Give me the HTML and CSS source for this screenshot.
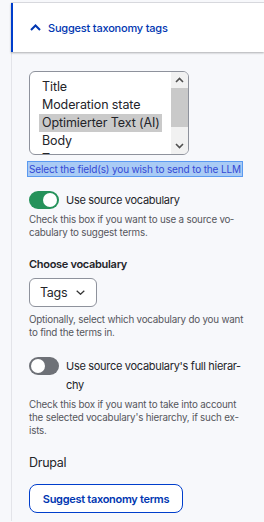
FILE: index.html
```html
<!DOCTYPE html>
<html lang="en">
<head>
<meta charset="utf-8">
<link rel="stylesheet" href="styles.css">
</head>
<body>
<div class="panel">
  <div class="summary">
    <svg class="chev" width="11" height="7" viewBox="0 0 11 7"><path d="M1 6 L5.5 1.5 L10 6" fill="none" stroke="#0036b1" stroke-width="2"/></svg>
    <span class="summary-text">Suggest taxonomy tags</span>
  </div>
  <div class="content">
    <div class="listbox">
      <div class="options">
        <div class="opt">Title</div>
        <div class="opt">Moderation state</div>
        <div class="opt sel">Optimierter Text (AI)</div>
        <div class="opt">Body</div>
        <div class="opt">Tags</div>
      </div>
      <div class="scrollbar">
        <svg class="arrow" width="17" height="16" viewBox="0 0 17 16"><path d="M5 10 L8.5 6.5 L12 10" fill="none" stroke="#505050" stroke-width="1.6"/></svg>
        <div class="track"><div class="thumb"></div></div>
        <svg class="arrow" width="17" height="16" viewBox="0 0 17 16"><path d="M5 6 L8.5 9.5 L12 6" fill="none" stroke="#505050" stroke-width="1.6"/></svg>
      </div>
    </div>
    <div class="field-desc"><span class="selected-text">Select the field(s) you wish to send to the LLM</span></div>

    <div class="toggle-row">
      <span class="toggle on"><span class="knob"></span></span>
      <span class="toggle-label">Use source vocabulary</span>
    </div>
    <p class="desc first">Check this box if you want to use a source vo&shy;cabulary to suggest terms.</p>

    <div class="label-strong">Choose vocabulary</div>
    <div class="dropdown">
      <span>Tags</span>
      <svg width="9" height="5" viewBox="0 0 9 5"><path d="M0.7 0.7 L4.5 4.3 L8.3 0.7" fill="none" stroke="#333" stroke-width="1.2"/></svg>
    </div>
    <p class="desc second">Optionally, select which vocabulary do you want to find the terms in.</p>

    <div class="toggle-row two">
      <span class="toggle off"><span class="knob"></span></span>
      <span class="toggle-label">Use source vocabulary's full hierar&shy;chy</span>
    </div>
    <p class="desc third">Check this box if you want to take into account the selected vocabulary's hierarchy, if such ex-<br>ists.</p>

    <div class="plain">Drupal</div>
    <button class="btn">Suggest taxonomy terms</button>
  </div>
</div>
</body>
</html>
```

FILE: styles.css
```css
html {
  background: #f7f8fb;
}
html, body {
  margin: 0;
  padding: 0;
}
body {
  font-family: Inter, "Liberation Sans", sans-serif;
  color: #232429;
  padding-top: 2px;
  padding-left: 11px;
}
.panel {
  border-top: 1px solid #dcdde2;
}
.summary {
  height: 49px;
  background: #fff;
  border-left: 2px solid #003ecc;
  box-shadow: 0 1px 2px rgba(0, 0, 0, 0.3);
  display: flex;
  align-items: center;
  padding-left: 17px;
  gap: 7px;
  position: relative;
}
.chev {
  display: block;
  margin-top: -1px;
}
.summary-text {
  color: #0036b1;
  font-size: 11px;
  letter-spacing: -0.2px;
  font-weight: 500;
}
.content {
  border-left: 1px solid #e3e4e9;
  padding: 19px 15px 8px 17px;
  min-height: 469px;
  box-sizing: border-box;
}
.listbox {
  width: 158px;
  height: 82px;
  border: 1px solid #8e929c;
  border-radius: 6px;
  background: #fff;
  display: flex;
  overflow: hidden;
}
.options {
  flex: 1;
  padding: 6px 0 0 9px;
  overflow: hidden;
}
.opt {
  height: 18px;
  line-height: 18px;
  font-size: 12.5px;
  letter-spacing: -0.1px;
  padding-left: 3px;
  width: 120px;
  color: #232429;
  white-space: nowrap;
}
.opt.sel {
  background: #cacaca;
}
.scrollbar {
  width: 17px;
  background: #f1f1f1;
  display: flex;
  flex-direction: column;
}
.arrow {
  display: block;
}
.track {
  flex: 1;
  position: relative;
}
.thumb {
  position: absolute;
  left: 0;
  right: 0;
  top: 0;
  height: 39px;
  background: #c9c9c9;
}
.field-desc {
  margin-top: 2px;
  margin-left: -2px;
  height: 16px;
}
.selected-text {
  display: inline-block;
  font-size: 10px;
  letter-spacing: -0.15px;
  line-height: 14px;
  color: #3449d4;
  background: #a9cbf5;
  border: 1px solid #5b9af0;
  padding: 0 1px;
  white-space: nowrap;
}
.toggle-row {
  display: flex;
  align-items: center;
  gap: 7px;
  margin-top: 18px;
}
.toggle {
  flex: none;
  width: 30px;
  height: 18px;
  border-radius: 9px;
  position: relative;
  display: block;
}
.toggle.on { background: #25925a; }
.toggle.off { background: #6e7177; }
.knob {
  position: absolute;
  top: 2px;
  width: 14px;
  height: 14px;
  border-radius: 50%;
  background: #fff;
}
.toggle.on .knob { right: 2px; }
.toggle.off .knob { left: 2px; }
.toggle-label {
  font-size: 11px;
  letter-spacing: -0.3px;
  line-height: 18px;
}
.toggle-row.two {
  align-items: flex-start;
  margin-top: 18px;
}
.toggle-row.two .toggle-label {
  line-height: 19px;
}
.desc {
  margin: 4px 0 0;
  font-size: 9.8px;
  letter-spacing: -0.2px;
  line-height: 13px;
  color: #55565b;
}
.desc.second {
  margin-top: 6px;
}
.desc.third {
  margin-top: 3px;
}
.label-strong {
  margin-top: 17px;
  font-size: 11px;
  letter-spacing: -0.3px;
  font-weight: 600;
  line-height: 16px;
}
.dropdown {
  margin-top: 6px;
  width: 56px;
  height: 27px;
  border: 1px solid #8e929c;
  border-radius: 6px;
  background: #fff;
  display: flex;
  align-items: center;
  gap: 9px;
  padding-left: 10px;
  font-size: 12.5px;
  letter-spacing: -0.3px;
}
.dropdown svg {
  display: block;
}
.plain {
  margin-top: 18px;
  font-size: 12.5px;
  letter-spacing: -0.3px;
  line-height: 16px;
}
.btn {
  display: block;
  margin-top: 13px;
  width: 154px;
  height: 29px;
  box-sizing: border-box;
  border: 1px solid #003ecc;
  border-radius: 8px;
  background: #fff;
  color: #0036b1;
  font-family: Inter, "Liberation Sans", sans-serif;
  font-size: 11px;
  letter-spacing: -0.3px;
  font-weight: 600;
  padding: 0;
}
```
